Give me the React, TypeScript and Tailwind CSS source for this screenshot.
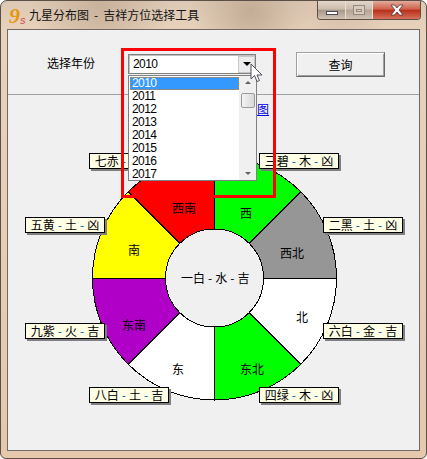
const cx = 206.5;
const cy = 183;
const R = 122;
const r = 49;

function sector(startDeg: number, endDeg: number) {
  const p = (rad: number, deg: number) => {
    const a = (deg * Math.PI) / 180;
    return `${(cx + rad * Math.sin(a)).toFixed(2)} ${(cy - rad * Math.cos(a)).toFixed(2)}`;
  };
  return `M${p(r, startDeg)} L${p(R, startDeg)} A${R} ${R} 0 0 1 ${p(R, endDeg)} L${p(r, endDeg)} A${r} ${r} 0 0 0 ${p(r, startDeg)} Z`;
}

const sectors = [
  { fill: "#00ff00", from: 0, to: 45 },
  { fill: "#969696", from: 45, to: 90 },
  { fill: "#ffffff", from: 90, to: 135 },
  { fill: "#00ff00", from: 135, to: 180 },
  { fill: "#ffffff", from: 180, to: 225 },
  { fill: "#b000c8", from: 225, to: 270 },
  { fill: "#ffff00", from: 270, to: 315 },
  { fill: "#ff0000", from: 315, to: 360 },
];

const dirs: { t: string; cls: string }[] = [
  { t: "西南", cls: "left-[164px] top-[106px]" },
  { t: "西", cls: "left-[232px] top-[111px]" },
  { t: "南", cls: "left-[120px] top-[148px]" },
  { t: "西北", cls: "left-[272px] top-[151px]" },
  { t: "东南", cls: "left-[114px] top-[223px]" },
  { t: "北", cls: "left-[288px] top-[215px]" },
  { t: "东", cls: "left-[164px] top-[267px]" },
  { t: "东北", cls: "left-[232px] top-[267px]" },
];

function Dash({ cls }: { cls: string }) {
  return <span className={cls}>-</span>;
}

function Tag({ a, b, c, cls }: { a: string; b: string; c: string; cls: string }) {
  return (
    <div className={`absolute ${cls} flex h-[16px] w-[80px] items-center justify-center border border-black bg-[#ffffe6] text-[12px] leading-none text-black shadow-[2px_2px_0_#808080]`}>
      <span>{a}</span>
      <Dash cls="mx-[3px] text-[#00609c]" />
      <span>{b}</span>
      <Dash cls="mx-[3px] text-[#00609c]" />
      <span>{c}</span>
    </div>
  );
}

const years = ["2011", "2012", "2013", "2014", "2015", "2016", "2017"];
const sans = { fontFamily: '"Liberation Sans", sans-serif' };

export default function App() {
  return (
    <div
      className="relative flex h-[459px] w-[427px] flex-col overflow-hidden rounded-t-[7px] rounded-b-[6px] border border-[#5a5048] bg-[#e6c8ac] bg-[radial-gradient(circle_at_100px_4px,#c9b29c_0,transparent_70px),radial-gradient(circle_at_250px_10px,#c4ad96_0,transparent_60px),radial-gradient(circle_at_340px_8px,#d8c0ac_0,transparent_50px),linear-gradient(180deg,#dcc8b4_0,#e8d2bc_30px,#e6c8ac_100%)] text-black"
      style={{ fontFamily: '"Noto Sans CJK SC", "Liberation Sans", sans-serif' }}
    >
      {/* title bar */}
      <div className="flex h-[28px] shrink-0 items-start pl-[8px] pr-[5px]">
        <div className="relative mt-[4px] h-[20px] w-[20px] leading-none">
          <span className="absolute left-0 top-0 text-[22px] font-bold italic text-[#e8960c]" style={{ fontFamily: '"Liberation Serif", serif' }}>9</span>
          <span className="absolute left-[11px] top-[10px] text-[11px] italic text-[#d84848]" style={sans}>s</span>
        </div>
        <div className="mt-[6px] flex text-[12px] leading-[16px] text-[#141414]">
          <span>九星分布图</span>
          <span className="mx-[5px]">-</span>
          <span>吉祥方位选择工具</span>
        </div>
        <div className="ml-auto flex h-[19px] w-[104px] overflow-hidden rounded-b-[4px] border border-t-0 border-[#5c5046]">
          <div className="flex w-[28px] items-center justify-center border-r border-[#e8e0d8] bg-[linear-gradient(180deg,#e2d6ca_0,#ccbcac_45%,#a8988a_52%,#d0c2b4_100%)]">
            <div className="mt-[6px] h-[4px] w-[12px] border border-[#4a4a58] bg-white" />
          </div>
          <div className="flex w-[27px] items-center justify-center border-r border-[#e8e0d8] bg-[linear-gradient(180deg,#e2d6ca_0,#ccbcac_45%,#b4a496_52%,#d0c2b4_100%)]">
            <div className="flex h-[10px] w-[12px] items-center justify-center border border-[#96887c] bg-[#d8ccc0]">
              <div className="h-[3px] w-[6px] border border-[#96887c]" />
            </div>
          </div>
          <div className="flex flex-1 items-center justify-center bg-[linear-gradient(180deg,#e2ac9c_0,#d0604a_45%,#b8301c_52%,#d8705c_100%)]">
            <svg width="14" height="12" viewBox="0 0 14 12">
              <path d="M1 1h3.500L7 4l2.500-3H13L9 6l4 5H9.500L7 8l-2.500 3H1l4-5z" fill="#fff" stroke="#4a3a34" strokeWidth="0.8" />
            </svg>
          </div>
        </div>
      </div>

      {/* client area */}
      <div className="relative ml-[6px] flex h-[422px] w-[413px] shrink-0 flex-col border border-[#6e6a66] bg-[#f0f0f0]">
        {/* form row */}
        <div className="relative z-10 flex h-[64px] shrink-0 items-start border-b-0 pl-[39px] pt-[22px]">
          <div className="mt-[3px] w-[48px] text-[12px] leading-[16px]">选择年份</div>

          {/* combo with open list */}
          <div className="relative ml-[33px] mt-[2px] flex h-[20px] w-[128px] items-center border border-[#808080] bg-white pl-[4px] text-[12px] leading-none shadow-[inset_1px_1px_0_#c0c0c0]" style={sans}>
            <span className="tracking-[-0.6px]">2010</span>
            <div className="ml-auto flex h-[17px] w-[17px] items-center justify-center border border-[#c8c8c8] bg-[#ececec]">
              <div className="h-0 w-0 border-x-[4px] border-t-[4px] border-x-transparent border-t-black" />
            </div>

            <div className="absolute left-[-1px] top-[20px] flex h-[106px] w-[129px] border border-[#808080] bg-white leading-[13px]">
              <div className="flex-1 pl-px pt-px">
                <div className="h-[13px] border border-dotted border-[#e08020] bg-[#3399ff] pl-[1px] leading-[11px] tracking-[-0.6px] text-white">2010</div>
                {years.map((y) => (
                  <div key={y} className="h-[13px] pl-[2px] tracking-[-0.6px]">{y}</div>
                ))}
              </div>
              <div className="flex w-[17px] flex-col items-center bg-[#f0f0f0] py-[5px]">
                <div className="h-0 w-0 border-x-[3px] border-b-[3px] border-x-transparent border-b-[#606060]" />
                <div className="mt-[9px] h-[15px] w-[14px] rounded-[2px] border border-[#9a9a9a] bg-[linear-gradient(90deg,#f4f4f4,#d8d8d8)]" />
                <div className="mt-auto h-0 w-0 border-x-[3px] border-t-[3px] border-x-transparent border-t-[#606060]" />
              </div>
            </div>
          </div>

          <button className="ml-[40px] flex h-[25px] w-[89px] items-center justify-center border border-[#a0a0a0] border-b-[#696969] border-r-[#696969] bg-[#f0f0f0] text-[12px] shadow-[inset_1px_1px_0_#ffffff,inset_-1px_-1px_0_#a0a0a0]">查询</button>
        </div>

        <div className="h-px shrink-0 bg-[#a0a0a0]" />

        {/* diagram canvas */}
        <div className="relative flex-1">
          <svg className="absolute inset-0" width="411" height="356" shapeRendering="crispEdges">
            {sectors.map((s) => (
              <path key={s.from} d={sector(s.from, s.to)} fill={s.fill} stroke="#000" strokeWidth="1" />
            ))}
          </svg>

          <div className="relative ml-[249px] pt-[7px] text-[12px] leading-[14px] text-[#0000ee] underline">图</div>

          {dirs.map((d) => (
            <div key={d.t} className={`absolute ${d.cls} text-[12px] leading-[14px]`}>{d.t}</div>
          ))}
          <div className="absolute left-[173px] top-[176px] flex text-[12px] leading-[14px]">
            <span>一白</span>
            <Dash cls="mx-[3px]" />
            <span>水</span>
            <Dash cls="mx-[3px]" />
            <span>吉</span>
          </div>

          <Tag a="七赤" b="金" c="凶" cls="left-[81px] top-[58px]" />
          <Tag a="三碧" b="木" c="凶" cls="left-[251px] top-[58px]" />
          <Tag a="五黄" b="土" c="凶" cls="left-[17px] top-[122px]" />
          <Tag a="二黑" b="土" c="凶" cls="left-[315px] top-[122px]" />
          <Tag a="九紫" b="火" c="吉" cls="left-[17px] top-[228px]" />
          <Tag a="六白" b="金" c="吉" cls="left-[315px] top-[228px]" />
          <Tag a="八白" b="土" c="吉" cls="left-[81px] top-[292px]" />
          <Tag a="四绿" b="木" c="凶" cls="left-[251px] top-[292px]" />
        </div>

        {/* red highlight */}
        <div className="absolute left-[113px] top-[18px] z-20 h-[150px] w-[155px] border-[3px] border-[#ff0000]" />

        {/* mouse pointer */}
        <svg className="absolute left-[242px] top-[33px] z-20" width="14" height="20" viewBox="0 0 14 20">
          <path d="M1 1v15l3.500-3.500L7 18.500l2.500-1L7 12h5z" fill="#fff" stroke="#50505a" strokeWidth="1" />
        </svg>
      </div>
    </div>
  );
}
